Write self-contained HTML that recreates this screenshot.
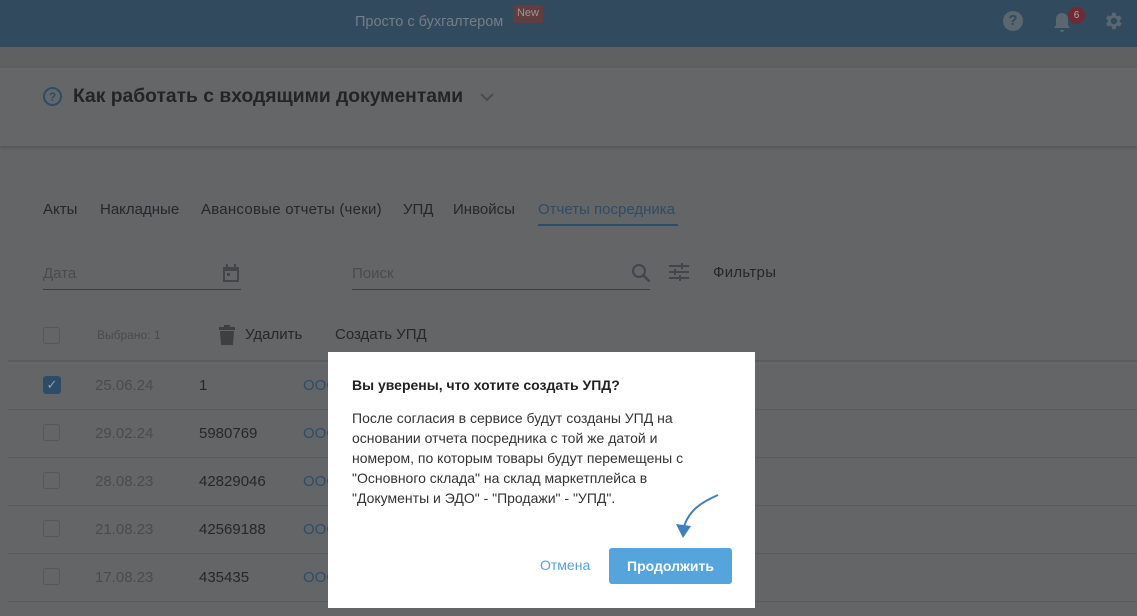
<!DOCTYPE html>
<html><head><meta charset="utf-8"><style>
body{margin:0;width:1137px;height:616px;overflow:hidden;background:#646567;font-family:"Liberation Sans",sans-serif;position:relative}
.a{position:absolute;white-space:nowrap}
.hdr{position:absolute;left:0;top:0;width:1137px;height:47px;background:#324a5e}
.band{position:absolute;left:0;top:47px;width:1137px;height:21px;background:#5f6062}
.tband{position:absolute;left:0;top:68px;width:1137px;height:78px;background:#656668;box-shadow:0 2px 3px rgba(0,0,0,.15)}
.t{color:#262729;font-size:15px}
.g{color:#4a4b4d}
.line{position:absolute;height:1px;background:#5a5b5d;left:8px;width:1129px}
.cb{position:absolute;left:43px;width:17px;height:17px;border:1px solid #56575a;border-radius:3px;box-sizing:border-box}
.modal{position:absolute;left:328px;top:352px;width:427px;height:256px;background:#fff}
</style></head><body>
<div class="hdr"></div>
<div class="a" style="left:355px;top:14px;color:#757d85;font-size:14.5px">Просто с бухгалтером</div>
<div class="a" style="left:513px;top:5px;width:30px;height:18px;background:#5f3e41;border-radius:2px;color:#a79193;font-size:11px;text-align:center;line-height:17px">New</div>
<div class="a" style="left:1003px;top:11px;width:20px;height:20px;border-radius:50%;background:#5a6670;color:#324a5e;font-weight:bold;font-size:15px;text-align:center;line-height:20px">?</div>
<svg class="a" style="left:1052px;top:10px" width="20" height="24" viewBox="0 0 20 24"><path d="M10 3c-4 0-6 3-6 6v6l-2 3h16l-2-3V9c0-3-2-6-6-6zM8 20h4a2 2 0 0 1-4 0z" fill="#5a6670"/></svg>
<div class="a" style="left:1068px;top:7px;width:17px;height:17px;border-radius:50%;background:#6f2b35;color:#b8a7aa;font-size:10px;text-align:center;line-height:17px">6</div>
<svg class="a" style="left:1102px;top:10px" width="22" height="22" viewBox="0 0 24 24"><path fill="#5a6670" d="M19.4 13a7.5 7.5 0 0 0 0-2l2.1-1.6-2-3.5-2.5 1a7 7 0 0 0-1.7-1L15 3h-4l-.4 2.9a7 7 0 0 0-1.7 1l-2.5-1-2 3.5L6.6 11a7.5 7.5 0 0 0 0 2l-2.1 1.6 2 3.5 2.5-1a7 7 0 0 0 1.7 1L11 21h4l.4-2.9a7 7 0 0 0 1.7-1l2.5 1 2-3.5zM13 15.5a3.5 3.5 0 1 1 0-7 3.5 3.5 0 0 1 0 7z"/></svg>
<div class="band"></div>
<div class="tband"></div>
<div class="a" style="left:43px;top:87px;width:19px;height:19px;border:2px solid #2d4c66;border-radius:50%;box-sizing:border-box;color:#2d4c66;font-size:12px;font-weight:bold;text-align:center;line-height:16px">?</div>
<div class="a" style="left:73px;top:86px;font-size:19.3px;font-weight:bold;color:#232426">Как работать с входящими документами</div>
<svg class="a" style="left:480px;top:93px" width="14" height="9" viewBox="0 0 14 9"><path d="M1 1l6 6 6-6" fill="none" stroke="#4a4b4d" stroke-width="2"/></svg>
<div class="a t" style="left:43px;top:201px">Акты</div>
<div class="a t" style="left:100px;top:201px">Накладные</div>
<div class="a t" style="left:201px;top:201px;letter-spacing:.25px">Авансовые отчеты (чеки)</div>
<div class="a t" style="left:403px;top:201px">УПД</div>
<div class="a t" style="left:453px;top:201px">Инвойсы</div>
<div class="a t" style="left:538px;top:201px;color:#2c4c68">Отчеты посредника</div>
<div class="a" style="left:538px;top:224px;width:140px;height:2px;background:#2c4c68"></div>
<div class="a t g" style="left:43px;top:265px;font-size:15px">Дата</div>
<div class="a" style="left:43px;top:289px;width:198px;height:1px;background:#3d3e40"></div>
<svg class="a" style="left:221px;top:263px" width="20" height="20" viewBox="0 0 20 20"><path fill="#444548" d="M2 4h16v15H2zM4 8v9h12V8zM5 1h2v4H5zM13 1h2v4h-2zM6 10h3v3H6z"/></svg>
<div class="a t g" style="left:352px;top:265px">Поиск</div>
<div class="a" style="left:352px;top:289px;width:298px;height:1px;background:#3d3e40"></div>
<svg class="a" style="left:631px;top:263px" width="20" height="20" viewBox="0 0 20 20"><circle cx="8" cy="8" r="6" fill="none" stroke="#444548" stroke-width="2"/><path d="M12.5 12.5l6 6" stroke="#444548" stroke-width="2.5"/></svg>
<svg class="a" style="left:668px;top:262px" width="22" height="20" viewBox="0 0 22 20"><path stroke="#444548" stroke-width="2" d="M1 4h20M1 10h20M1 16h20"/><path stroke="#444548" stroke-width="2" d="M14 1v6M7 7v6M12 13v6"/></svg>
<div class="a t" style="left:713px;top:264px;letter-spacing:.3px">Фильтры</div>
<div class="cb" style="top:327px"></div>
<div class="a g" style="left:97px;top:328px;font-size:12px">Выбрано: 1</div>
<svg class="a" style="left:217px;top:324px" width="20" height="22" viewBox="0 0 20 22"><path fill="#3e3f41" d="M2 3h16v3H2zM7 1h6v2H7zM3 7h14l-1 14H4z"/></svg>
<div class="a t" style="left:245px;top:326px">Удалить</div>
<div class="a t" style="left:335px;top:326px">Создать УПД</div>
<div class="line" style="top:360px;height:2px"></div>
<div class="a" style="left:43px;top:376px;width:18px;height:18px;background:#2c4c68;border-radius:3px;color:#8fa3b5;font-size:13px;text-align:center;line-height:18px">✓</div>
<div class="a t g" style="left:95px;top:377px;font-size:15px">25.06.24</div><div class="a t" style="left:199px;top:377px">1</div><div class="a t" style="left:303px;top:377px;color:#2c4c68">ООО</div>
<div class="line" style="top:409px"></div>
<div class="cb" style="top:424px"></div>
<div class="a t g" style="left:95px;top:425px">29.02.24</div><div class="a t" style="left:199px;top:425px">5980769</div><div class="a t" style="left:303px;top:425px;color:#2c4c68">ООО</div>
<div class="line" style="top:457px"></div>
<div class="cb" style="top:472px"></div>
<div class="a t g" style="left:95px;top:473px">28.08.23</div><div class="a t" style="left:199px;top:473px">42829046</div><div class="a t" style="left:303px;top:473px;color:#2c4c68">ООО</div>
<div class="line" style="top:505px"></div>
<div class="cb" style="top:520px"></div>
<div class="a t g" style="left:95px;top:521px">21.08.23</div><div class="a t" style="left:199px;top:521px">42569188</div><div class="a t" style="left:303px;top:521px;color:#2c4c68">ООО</div>
<div class="line" style="top:553px"></div>
<div class="cb" style="top:568px"></div>
<div class="a t g" style="left:95px;top:569px">17.08.23</div><div class="a t" style="left:199px;top:569px">435435</div><div class="a t" style="left:303px;top:569px;color:#2c4c68">ООО</div>
<div class="line" style="top:601px"></div>
<div class="modal"></div>
<div class="a" style="left:352px;top:377px;font-size:14px;font-weight:bold;color:#222">Вы уверены, что хотите создать УПД?</div>
<div class="a" style="left:352px;top:408px;font-size:14px;color:#333;line-height:20px;white-space:normal;width:390px">После согласия в сервисе будут созданы УПД на<br>основании отчета посредника с той же датой и<br>номером, по которым товары будут перемещены с<br>"Основного склада" на склад маркетплейса в<br>"Документы и ЭДО" - "Продажи" - "УПД".</div>
<svg class="a" style="left:672px;top:492px" width="50" height="50" viewBox="0 0 50 50"><path d="M46 3C30 10 16 18 11 38" fill="none" stroke="#3f7fbf" stroke-width="2"/><path d="M4 32l7 14 8-12z" fill="#3f7fbf"/></svg>
<div class="a" style="left:540px;top:557px;font-size:14px;color:#5aa0d6">Отмена</div>
<div class="a" style="left:609px;top:548px;width:123px;height:36px;background:#55a4dc;border-radius:3px;color:#fff;font-size:14px;font-weight:bold;text-align:center;line-height:36px">Продолжить</div>
</body></html>
